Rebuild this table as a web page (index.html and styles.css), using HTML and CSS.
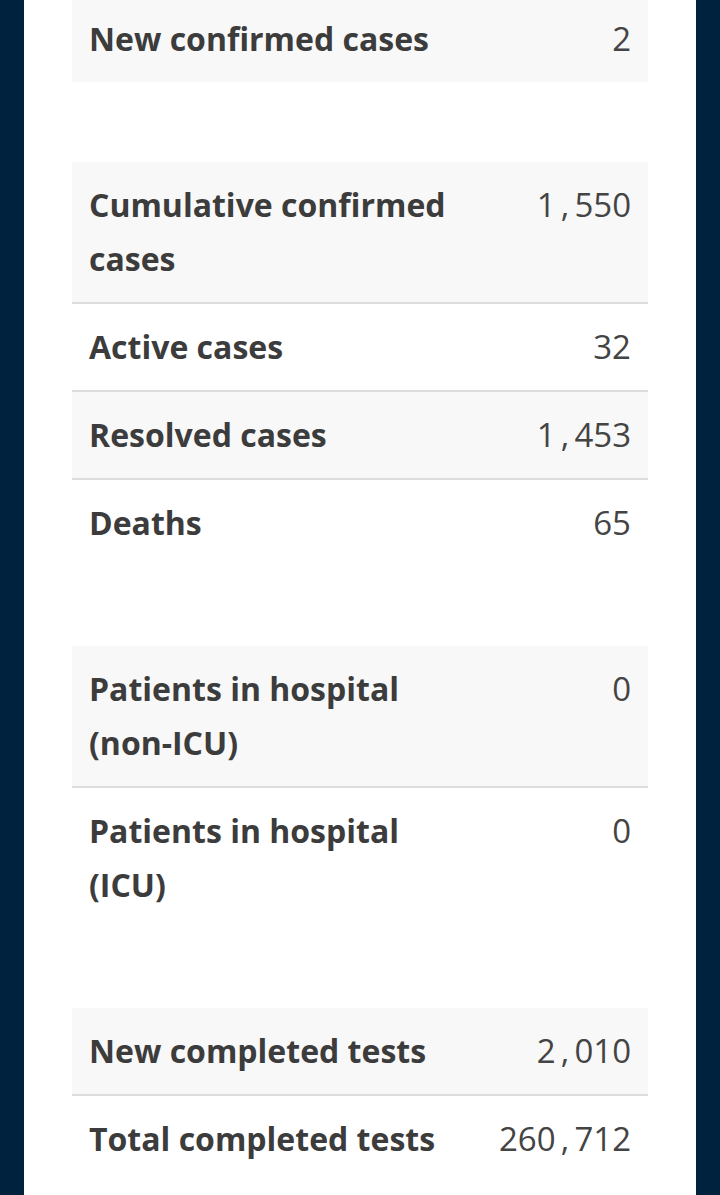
FILE: index.html
```html
<!DOCTYPE html>
<html lang="en">
<head>
<meta charset="utf-8">
<title>Case summary</title>
<link rel="stylesheet" href="styles.css">
</head>
<body>
<main class="page">
  <table class="stats first">
    <tbody>
      <tr><th>New confirmed cases</th><td>2</td></tr>
    </tbody>
  </table>
  <table class="stats">
    <tbody>
      <tr><th>Cumulative confirmed cases</th><td>1<span class="sep">,</span>550</td></tr>
      <tr><th>Active cases</th><td>32</td></tr>
      <tr><th>Resolved cases</th><td>1<span class="sep">,</span>453</td></tr>
      <tr><th>Deaths</th><td>65</td></tr>
    </tbody>
  </table>
  <table class="stats">
    <tbody>
      <tr><th>Patients in hospital (non-ICU)</th><td>0</td></tr>
      <tr><th>Patients in hospital (ICU)</th><td>0</td></tr>
    </tbody>
  </table>
  <table class="stats">
    <tbody>
      <tr><th>New completed tests</th><td>2<span class="sep">,</span>010</td></tr>
      <tr><th>Total completed tests</th><td>260<span class="sep">,</span>712</td></tr>
    </tbody>
  </table>
</main>
</body>
</html>
```

FILE: styles.css
```css
html, body {
  margin: 0;
  padding: 0;
  background: #00223f;
}
body {
  height: 100vh;
  overflow: hidden;
}
.page {
  display: block;
  margin: 0 24px;
  padding: 0 48px;
  background: #ffffff;
  min-height: calc(100vh + 20px);
  box-sizing: border-box;
  color: #3c3c3c;
}
.stats {
  width: 100%;
  border-collapse: collapse;
  table-layout: fixed;
  margin-bottom: 80px;
}
.stats.first {
  margin-top: -4px;
}
.stats tr {
  border-bottom: 2px solid #dddddd;
}
.stats tr:last-child {
  border-bottom: none;
}
.stats tr:nth-child(odd) {
  background: #f8f8f8;
}
.stats th,
.stats td {
  padding: 16px 17px 16px;
  vertical-align: top;
  line-height: 54px;
}
.stats th {
  width: 70%;
  text-align: left;
  font-family: "Open Sans", "Noto Sans", sans-serif;
  font-weight: 700;
  font-size: 32px;
  box-sizing: border-box;
}
.stats td {
  text-align: right;
  font-family: "Open Sans", "Noto Sans", sans-serif;
  font-variant-numeric: tabular-nums;
  font-weight: 400;
  font-size: 33px;
  white-space: nowrap;
  color: #444444;
}
.stats .sep {
  display: inline-block;
  width: 0.572em;
  text-align: center;
}
```
